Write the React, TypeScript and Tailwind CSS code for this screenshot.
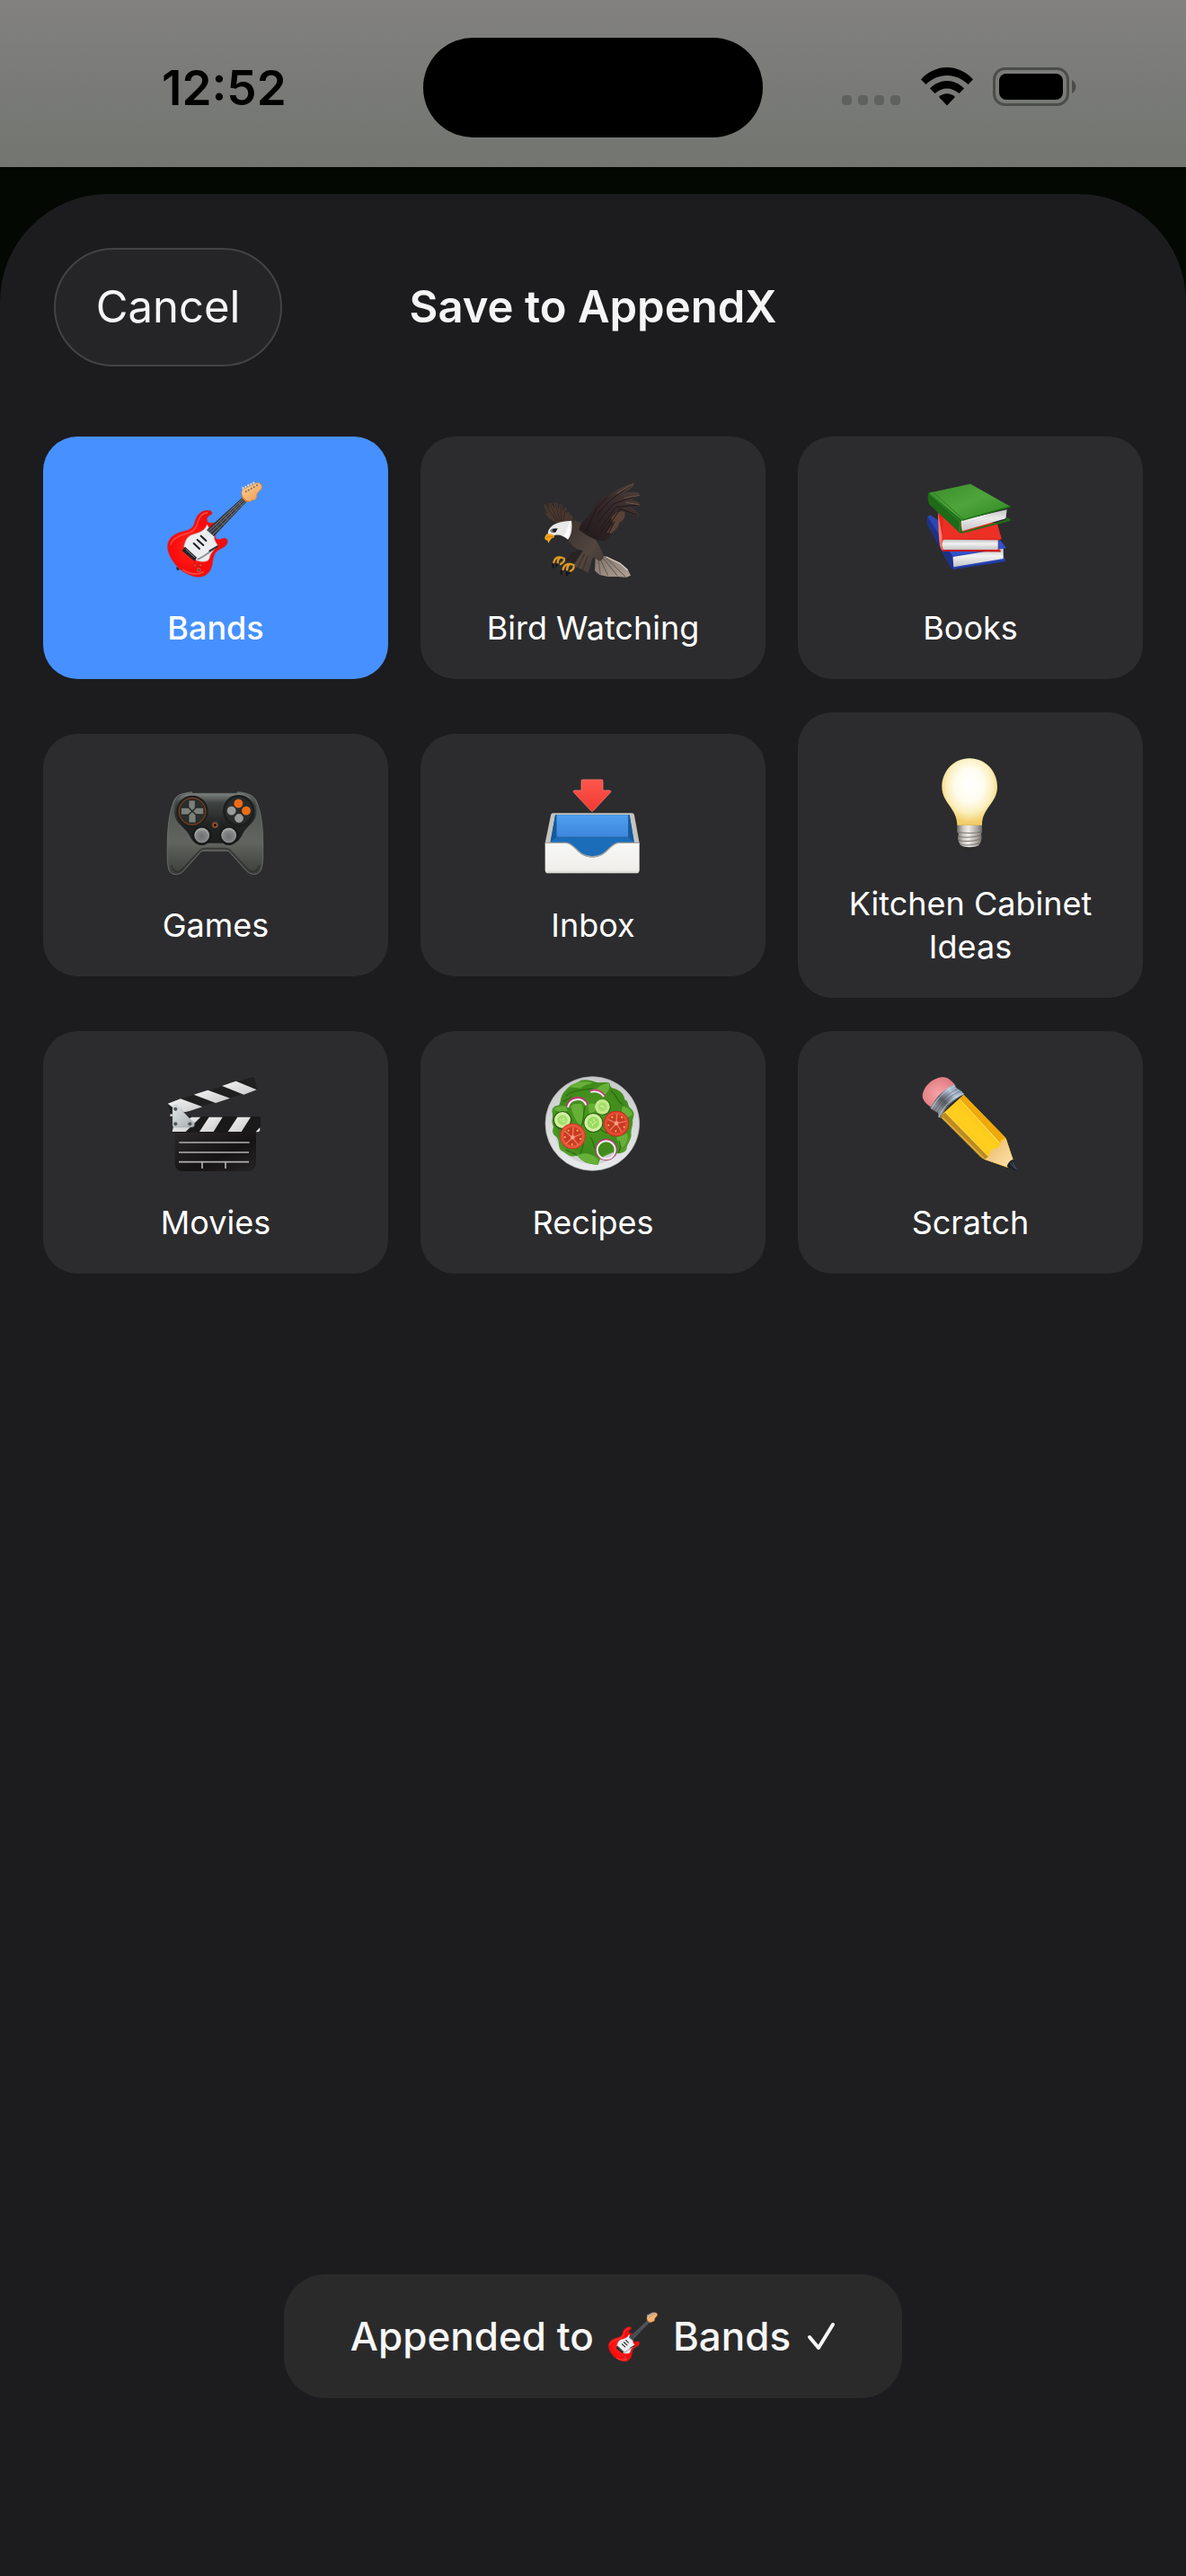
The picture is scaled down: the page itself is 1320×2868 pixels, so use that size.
import type { ReactNode } from 'react'

const Guitar = ({ className }: { className: string }) => {
  return (
    <svg viewBox="78 72 324 324" className={className} aria-hidden="true">
      <defs>
        <radialGradient id="guitarBody" cx="0.42" cy="0.55" r="0.6">
          <stop offset="0" stopColor="#ff2a20" />
          <stop offset="0.6" stopColor="#fb0a0a" />
          <stop offset="1" stopColor="#e41212" />
        </radialGradient>
        <linearGradient id="guitarHead" x1="0" y1="0" x2="1" y2="1">
          <stop offset="0" stopColor="#ffd29a" />
          <stop offset="1" stopColor="#ee9a4c" />
        </linearGradient>
      </defs>
      <path d="M108 364l12 2-2 9-8-1z" fill="#30343c" />
      <path d="M80 300C78 270 100 252 132 245C157 240 166 232 171 213C177 188 194 175 214 175C228 175 233 186 222 190C212 194 207 206 214 214C220 220 230 216 238 216L246 240C238 256 236 264 243 270C252 277 262 266 272 268C283 272 281 285 273 293C262 302 246 305 238 318C228 335 232 350 224 370C214 392 195 400 172 396C140 388 118 372 102 350C90 335 82 318 80 300Z" fill="url(#guitarBody)" stroke="#c9252f" strokeWidth="2" />
      <path d="M90 290C95 268 120 258 145 252C170 246 178 228 181 212C186 194 198 184 214 182" fill="none" stroke="#ff6a5c" strokeWidth="5" opacity="0.6" />
      <path d="M130 372C150 388 180 392 200 380" fill="none" stroke="#ff7a66" strokeWidth="6" opacity="0.5" />
      <path d="M211 222C206 240 190 248 162 256C142 263 138 280 134 296L176 342C198 349 216 346 219 335C222 315 240 303 247 291C238 280 233 268 236 256L222 240Z" fill="#eceef0" stroke="#b8a5a5" strokeWidth="2" />
      <path d="M333 128L347 142L234 262L210 240Z" fill="#33373d" />
      <path d="M334 133L214 246M338 137L220 252M343 141L228 258" stroke="#a9adb2" strokeWidth="2" />
      <path d="M214 246L172 290M220 252L178 296" stroke="#c3c6c9" strokeWidth="1" />
      <path d="M316 148l13 14M300 164l13 14M285 180l14 14M270 196l14 14M255 211l16 15M241 226l16 15" stroke="#7c8087" strokeWidth="2" />
      <path d="M191 260l17 16M179 273l20 18M167 285l19 18" stroke="#1d1f24" strokeWidth="6" strokeLinecap="round" />
      <path d="M138 296L177 332L170 345L128 310Z" fill="#24262a" />
      <path d="M140 304L170 332" stroke="#8c8f94" strokeWidth="3" />
      <path d="M178 338C192 336 210 322 234 303" fill="none" stroke="#8b9096" strokeWidth="5" />
      <path d="M220 310L246 295" stroke="#2f3338" strokeWidth="6" strokeLinecap="round" />
      <circle cx="171" cy="359" r="6" fill="#f23a30" stroke="#a80d0d" strokeWidth="2" />
      <circle cx="190" cy="358" r="6" fill="#f23a30" stroke="#a80d0d" strokeWidth="2" />
      <circle cx="184" cy="374" r="5" fill="#5b3030" stroke="#c9a3a0" strokeWidth="2" />
      <path d="M330 104C324 118 328 132 336 137C344 147 359 147 363 139C371 145 379 132 377 123C378 112 394 109 394 97C393 84 384 80 373 84Z" fill="url(#guitarHead)" stroke="#d9883f" strokeWidth="2" />
      <path d="M328 125C330 138 342 146 352 145" fill="none" stroke="#e7832c" strokeWidth="4" />
      <g fill="#e8eef5" stroke="#54657c" strokeWidth="1">
        <circle cx="331" cy="100" r="4" />
        <circle cx="340" cy="96" r="4" />
        <circle cx="349" cy="91" r="4" />
        <circle cx="358" cy="87" r="4" />
        <circle cx="367" cy="83" r="4" />
      </g>
      <g fill="#6c6a66">
        <circle cx="341" cy="112" r="3" />
        <circle cx="350" cy="107" r="3" />
        <circle cx="359" cy="102" r="3" />
        <circle cx="368" cy="97" r="3" />
        <circle cx="378" cy="91" r="3" />
      </g>
    </svg>
  )
}

const Eagle = () => {
  return (
    <svg viewBox="78 72 324 324" className="size-[108px] overflow-visible" aria-hidden="true">
      <defs>
        <linearGradient id="eagleWing" x1="1" y1="0" x2="0" y2="1">
          <stop offset="0" stopColor="#54423a" />
          <stop offset="0.45" stopColor="#35282a" />
          <stop offset="1" stopColor="#211919" />
        </linearGradient>
        <linearGradient id="eagleBody" x1="0" y1="0" x2="1" y2="1">
          <stop offset="0" stopColor="#39302d" />
          <stop offset="0.6" stopColor="#52463f" />
          <stop offset="1" stopColor="#3f3531" />
        </linearGradient>
        <linearGradient id="eagleTail" x1="0" y1="0" x2="1" y2="1">
          <stop offset="0" stopColor="#7d7067" />
          <stop offset="1" stopColor="#b0a295" />
        </linearGradient>
      </defs>
      <path d="M118 216L92 200L78 182L88 184L76 162L78 152L96 168L90 152L100 150L113 172L108 150L120 148L126 174L128 152L138 156L138 176L148 164L152 170L150 182L160 180L162 188L172 192L172 206L140 214Z" fill="#48372f" />
      <path d="M120 212L84 160M124 210L96 154M130 210L115 152M134 210L132 158M140 210L148 172" stroke="#2a211f" strokeWidth="2" />
      <path d="M248 326L282 328L330 350L356 372L366 392L352 398L322 396L290 396L262 390L246 376Z" fill="url(#eagleTail)" />
      <path d="M262 334L290 392M274 334L322 394M284 334L348 396M258 340L264 388" stroke="#5f544c" strokeWidth="3" />
      <path d="M284 330L330 352L356 374" fill="none" stroke="#d8cdc2" strokeWidth="4" />
      <path d="M166 208C185 206 205 215 214 232C240 262 258 280 276 326C272 345 262 350 246 332C242 328 238 334 236 342L224 384L204 372L180 362L178 345L148 342L168 314L192 306C175 300 160 282 152 264Z" fill="url(#eagleBody)" />
      <path d="M180 350L206 310L192 306L168 314L148 342Z" fill="#292423" />
      <path d="M190 365L212 320M205 374L222 326" stroke="#3b3230" strokeWidth="4" />
      <path d="M194 240C192 222 218 205 236 178C250 150 266 128 280 124L288 130C310 108 345 92 376 84C382 92 364 104 344 116C366 112 388 112 398 120C398 130 374 132 352 134C376 138 396 148 398 158C380 160 362 154 348 154C368 162 390 176 394 194C382 196 362 184 346 178C352 190 346 206 330 216C326 232 308 244 298 254C292 268 282 278 266 276C250 276 234 266 216 256Z" fill="url(#eagleWing)" />
      <path d="M345 178C350 194 344 208 328 216C326 232 312 242 300 252L286 248L308 218L300 200L320 180Z" fill="#5b4236" />
      <path d="M370 88L296 142L252 190M394 122L310 152L256 214M392 156L316 164L264 236M388 190L330 170L280 248M288 130L252 168L222 230M302 200L262 252M236 200L216 246M312 212L290 256" fill="none" stroke="#1f1818" strokeWidth="3" />
      <path d="M374 86L320 118M394 124L344 134M394 156L350 148" stroke="#6b5850" strokeWidth="3" />
      <path d="M168 209C145 210 118 214 104 226C92 236 88 246 90 256L106 260C122 252 140 258 156 272C168 260 172 232 168 209Z" fill="#e9e9e8" />
      <path d="M166 212C160 230 166 248 156 270L142 260C156 248 152 226 166 212Z" fill="#ffffff" />
      <path d="M96 242C104 234 112 234 120 236L114 248L102 250Z" fill="#77797c" />
      <path d="M104 238L122 235L116 247L108 248Z" fill="#1c1d20" />
      <path d="M89 252C80 256 76 268 82 274C88 272 90 278 90 284C98 276 98 268 108 266C114 262 110 256 102 254Z" fill="#f2a51c" />
      <path d="M84 266C92 260 100 264 108 264" fill="none" stroke="#b56c0b" strokeWidth="2" />
      <g fill="none" stroke="#dc9822" strokeWidth="7" strokeLinecap="round" strokeLinejoin="round">
        <path d="M144 336C132 328 114 328 109 348M132 332C124 336 122 342 122 350M144 340C144 348 138 350 132 354" />
        <path d="M176 358C164 350 144 352 140 372M162 354C154 360 153 366 153 374M176 362C176 372 170 374 164 378" />
      </g>
      <g fill="none" stroke="#111318" strokeWidth="5" strokeLinecap="round">
        <path d="M106 354L107 366M121 354L116 362M134 376L134 388M152 378L153 392M163 382L157 386" />
      </g>
    </svg>
  )
}

const Books = () => {
  return (
    <svg viewBox="78 72 324 324" className="size-[108px]" aria-hidden="true">
      <defs>
        <linearGradient id="bookGreen" x1="0" y1="0" x2="1" y2="1">
          <stop offset="0" stopColor="#3a8c2c" />
          <stop offset="0.5" stopColor="#4fa53c" />
          <stop offset="1" stopColor="#2b8420" />
        </linearGradient>
        <linearGradient id="bookPages" x1="0" y1="0" x2="0" y2="1">
          <stop offset="0" stopColor="#bfc0c0" />
          <stop offset="0.4" stopColor="#f2f2f2" />
          <stop offset="1" stopColor="#c4c4c6" />
        </linearGradient>
      </defs>
      <path d="M97 196L106 190L180 240L340 274L359 300L350 304L350 332L357 338L356 344L184 371L176 368L97 222Z" fill="#2b47b4" />
      <path d="M97 196L178 320L184 371L176 368L97 222Z" fill="#1d3187" />
      <path d="M182 330L350 302L350 336L184 364Z" fill="url(#bookPages)" />
      <path d="M182 326L359 300L340 276L230 280L160 300Z" fill="#3451cb" />
      <path d="M184 369L356 343" stroke="#203a9e" strokeWidth="5" />
      <path d="M132 180L150 170L330 220L344 270L332 275L332 298L341 312L152 312C140 308 138 296 138 280Z" fill="#e3261d" />
      <path d="M132 180L146 262L144 300L150 310C138 306 136 280 134 250Z" fill="#ff7d6c" />
      <path d="M150 272L332 274L332 306L150 306C144 298 144 282 150 272Z" fill="url(#bookPages)" />
      <path d="M146 268L344 270L330 222L150 182Z" fill="#ec3026" />
      <path d="M148 309L341 311" stroke="#c41710" strokeWidth="5" />
      <path d="M208 208L362 172L358 202L212 244Z" fill="url(#bookPages)" />
      <path d="M214 226L360 188M213 234L359 196M214 218L360 180" stroke="#cfcfd1" strokeWidth="2" />
      <path d="M98 122C100 114 110 112 116 114L212 204C206 214 208 232 214 250L204 250L102 154C98 144 98 134 98 122Z" fill="#1e6a17" />
      <path d="M104 120L206 212L204 246" fill="none" stroke="#2f8e25" strokeWidth="3" />
      <path d="M102 116L240 86L374 162L212 208Z" fill="url(#bookGreen)" />
      <path d="M116 114L218 206" stroke="#2b7a20" strokeWidth="3" />
      <path d="M212 208L374 162" stroke="#1b6d12" strokeWidth="4" />
      <path d="M206 248L360 206L358 198L375 204L372 210L214 251Z" fill="#20701a" />
    </svg>
  )
}

const Gamepad = () => {
  return (
    <svg viewBox="78 45 324 324" className="size-[108px] overflow-visible" aria-hidden="true">
      <defs>
        <linearGradient id="padShell" x1="0" y1="0" x2="0" y2="1">
          <stop offset="0" stopColor="#4c504d" />
          <stop offset="0.6" stopColor="#62645f" />
          <stop offset="1" stopColor="#3c3e3b" />
        </linearGradient>
        <linearGradient id="padFace" x1="0" y1="0" x2="0" y2="1">
          <stop offset="0" stopColor="#7b817e" />
          <stop offset="0.18" stopColor="#3f4442" />
          <stop offset="0.6" stopColor="#202322" />
          <stop offset="1" stopColor="#1c1d1d" />
        </linearGradient>
        <radialGradient id="padStick" cx="0.5" cy="0.6" r="0.6">
          <stop offset="0" stopColor="#6c6f70" />
          <stop offset="0.7" stopColor="#85898a" />
          <stop offset="1" stopColor="#b9bdbd" />
        </radialGradient>
      </defs>
      <path d="M96 140C98 112 118 98 160 94L166 102H310L312 94C356 96 378 114 382 142Z" fill="#626763" />
      <path d="M118 106C136 98 146 100 170 100H306C330 100 346 100 360 108C388 126 398 200 398 262C398 300 400 340 390 358C380 374 358 374 344 360L288 298C284 293 280 292 274 292H202C196 292 192 293 188 298L132 360C116 376 92 374 84 356C76 330 79 290 79 250C82 190 90 124 118 106Z" fill="url(#padShell)" stroke="#7b7e7a" strokeWidth="2" />
      <path d="M92 340C98 368 118 366 130 352L186 292C192 286 196 284 204 284H272C280 284 284 286 290 292L346 352C360 366 380 366 386 340" fill="none" stroke="#2c2e2c" strokeWidth="6" opacity="0.7" />
      <path d="M124 108C136 101 150 101 166 101H310C328 101 340 102 354 110C372 124 380 150 374 176C366 202 340 212 330 236C318 262 300 272 276 266H202C180 280 164 262 152 240C140 216 112 204 104 178C98 150 106 120 124 108Z" fill="url(#padFace)" />
      <circle cx="162" cy="160" r="53" fill="#1d1f1f" />
      <circle cx="162" cy="160" r="45" fill="#2b2e2d" stroke="#9c4316" strokeWidth="3" />
      <path d="M150 123H172V148H200V170H174V198H150V171H124V148H150Z" fill="#7b807b" stroke="#161817" strokeWidth="2" />
      <path d="M150 148L174 171M174 148L150 171" stroke="#222524" strokeWidth="4" />
      <circle cx="317" cy="158" r="53" fill="#1c1e1e" />
      <circle cx="317" cy="158" r="45" fill="#282b2a" />
      <circle cx="316" cy="134" r="14" fill="#f26a10" stroke="#ff9a45" strokeWidth="1" />
      <circle cx="342" cy="158" r="14" fill="#f26a10" stroke="#ff9a45" strokeWidth="1" />
      <circle cx="293" cy="158" r="14" fill="#9a9b9b" stroke="#bfbfbf" strokeWidth="1" />
      <circle cx="318" cy="183" r="14" fill="#9a9b9b" stroke="#bfbfbf" strokeWidth="1" />
      <circle cx="238" cy="205" r="12" fill="#3a3d3c" />
      <circle cx="238" cy="206" r="7" fill="#25170f" stroke="#e0631a" strokeWidth="3" />
      <circle cx="194" cy="241" r="32" fill="#181a1a" />
      <circle cx="284" cy="241" r="32" fill="#181a1a" />
      <circle cx="194" cy="240" r="24" fill="url(#padStick)" stroke="#a6aaaa" strokeWidth="2" />
      <circle cx="284" cy="240" r="24" fill="url(#padStick)" stroke="#a6aaaa" strokeWidth="2" />
    </svg>
  )
}

const InboxTray = () => {
  return (
    <svg viewBox="78 45 324 324" className="size-[108px]" aria-hidden="true">
      <defs>
        <linearGradient id="trayBack" x1="0" y1="0" x2="0" y2="1">
          <stop offset="0" stopColor="#4f9ff0" />
          <stop offset="1" stopColor="#3d87dc" />
        </linearGradient>
        <linearGradient id="trayFront" x1="0" y1="0" x2="0" y2="1">
          <stop offset="0" stopColor="#f8f8f6" />
          <stop offset="0.9" stopColor="#efeeea" />
          <stop offset="1" stopColor="#cfcdc8" />
        </linearGradient>
        <linearGradient id="trayArrow" x1="0" y1="0" x2="0" y2="1">
          <stop offset="0" stopColor="#ff564c" />
          <stop offset="1" stopColor="#f03a34" />
        </linearGradient>
      </defs>
      <path d="M106 166H370C375 166 377 169 378 173L395 266L380 300H96L80 266L99 173C100 169 102 166 106 166Z" fill="#c6c4bf" />
      <path d="M114 172H362L377 262L340 320H130L98 262Z" fill="#1a66ae" />
      <path d="M118 172H358V246H118Z" fill="url(#trayBack)" />
      <path d="M118 172V246L98 262L114 172Z" fill="#15599b" />
      <path d="M358 172V246L377 262L362 172Z" fill="#15599b" />
      <path d="M118 246H358L377 264V320H98V264Z" fill="#1c6db9" />
      <path d="M118 246H358" stroke="#2a5f93" strokeWidth="2" />
      <path d="M80 266H150C182 268 186 312 238 313C290 312 294 268 326 266H395V356C395 363 391 367 384 367H91C84 367 80 363 80 356Z" fill="url(#trayFront)" />
      <path d="M82 265H150C182 267 186 311 238 312C290 311 294 267 326 265H393" fill="none" stroke="#a7a49f" strokeWidth="4" />
      <path d="M206 54H269C272 54 273 56 273 58V90H295C300 90 301 94 298 97L242 157C239 161 235 161 232 157L176 97C173 94 174 90 179 90H201V58C201 56 203 54 206 54Z" fill="url(#trayArrow)" stroke="#ff8078" strokeWidth="2" />
    </svg>
  )
}

const Bulb = () => {
  return (
    <svg viewBox="288 183 324 324" className="size-[108px]" aria-hidden="true">
      <defs>
        <radialGradient id="bulbGlass" cx="0.5" cy="0.4" r="0.62">
          <stop offset="0" stopColor="#ffffff" />
          <stop offset="0.4" stopColor="#fffdf0" />
          <stop offset="0.68" stopColor="#fbeebb" />
          <stop offset="0.9" stopColor="#f3cf6c" />
        </radialGradient>
        <linearGradient id="bulbBase" x1="0" y1="0" x2="1" y2="0">
          <stop offset="0" stopColor="#75716d" />
          <stop offset="0.25" stopColor="#cfcac5" />
          <stop offset="0.45" stopColor="#eeebe8" />
          <stop offset="0.8" stopColor="#aaa5a0" />
          <stop offset="1" stopColor="#6e6a66" />
        </linearGradient>
      </defs>
      <path d="M426 486H470C466 498 460 504 448 504C436 504 430 498 426 486Z" fill="#2a2a28" />
      <path d="M406 416H489V438L486 446L488 458L485 472L478 484C468 492 428 492 418 484L411 472L408 458L411 446L406 438Z" fill="url(#bulbBase)" />
      <path d="M407 439C430 444 466 444 488 438M409 453C430 460 466 456 487 449M410 466C430 473 466 469 486 462M414 480C430 486 466 482 482 475" fill="none" stroke="#77726d" strokeWidth="3" />
      <path d="M447 193C500 193 540 236 540 288C540 342 488 360 489 416H406C406 360 355 342 355 288C355 236 395 193 447 193Z" fill="url(#bulbGlass)" />
      <path d="M407 415H488" stroke="#e7bd62" strokeWidth="3" />
    </svg>
  )
}

const Clapper = () => {
  return (
    <svg viewBox="78 78 324 324" className="size-[108px]" aria-hidden="true">
      <defs>
        <linearGradient id="clapStripe" x1="0" y1="0" x2="1" y2="1">
          <stop offset="0" stopColor="#f4f4f4" />
          <stop offset="1" stopColor="#c9c9c9" />
        </linearGradient>
        <linearGradient id="clapPlate" x1="0" y1="0" x2="1" y2="1">
          <stop offset="0" stopColor="#e3e7e9" />
          <stop offset="1" stopColor="#a6acb0" />
        </linearGradient>
        <linearGradient id="clapBoard" x1="0" y1="0" x2="1" y2="1">
          <stop offset="0" stopColor="#2a2829" />
          <stop offset="0.6" stopColor="#151314" />
          <stop offset="1" stopColor="#262425" />
        </linearGradient>
      </defs>
      <path d="M104 268H375V374C375 392 365 402 348 402H132C114 402 104 392 104 374Z" fill="url(#clapBoard)" />
      <path d="M80 174L360 88C366 86 369 90 371 96L378 130L92 216Z" fill="#201f20" />
      <path d="M80 176L123 160L196 187L150 202L120 208L88 182Z" fill="url(#clapStripe)" />
      <path d="M167 146L214 131L288 158L240 174Z" fill="url(#clapStripe)" />
      <path d="M261 117L308 101L377 130L334 146Z" fill="url(#clapStripe)" />
      <path d="M95 219H383C388 219 390 222 390 226V262C390 269 386 272 381 272H95Z" fill="#1a191a" />
      <path d="M218 221H263L233 270H186Z" fill="url(#clapStripe)" />
      <path d="M313 221H357L326 270H281Z" fill="url(#clapStripe)" />
      <path d="M160 221H190L140 270H95L98 256Z" fill="url(#clapStripe)" />
      <path d="M388 256V264C388 268 385 270 381 271H374Z" fill="#f4f4f4" />
      <path d="M100 184C105 180 111 181 115 186L167 240C172 246 170 255 160 255H102C98 255 96 252 96 248V192Z" fill="url(#clapPlate)" stroke="#888d90" strokeWidth="1" />
      <g fill="#4d5154" stroke="#8d9295" strokeWidth="1">
        <circle cx="106" cy="194" r="6" />
        <circle cx="106" cy="244" r="6" />
        <circle cx="154" cy="244" r="6" />
      </g>
      <circle cx="92" cy="215" r="4" fill="#e4e4e4" />
      <path d="M118 306H353M117 339H351M117 371H351M195 371V393M273 371V393" stroke="#b1b1b3" strokeWidth="5" />
    </svg>
  )
}

const Salad = () => {
  return (
    <svg viewBox="78 78 324 324" className="size-[108px]" aria-hidden="true">
      <defs>
        <linearGradient id="plate" x1="0" y1="0" x2="0" y2="1">
          <stop offset="0" stopColor="#c8c9cb" />
          <stop offset="1" stopColor="#e9eaec" />
        </linearGradient>
        <radialGradient id="leaf" cx="0.5" cy="0.45" r="0.6">
          <stop offset="0" stopColor="#4f9a22" />
          <stop offset="0.7" stopColor="#3f8a1b" />
          <stop offset="1" stopColor="#62a936" />
        </radialGradient>
      </defs>
      <circle cx="238" cy="243" r="157" fill="url(#plate)" stroke="#aeb0b3" strokeWidth="2" />
      <circle cx="238" cy="246" r="132" fill="#c2c4c6" opacity="0.6" />
      <path d="M150 130C165 112 185 108 200 98C215 94 235 98 248 104C270 108 285 102 296 108C296 118 300 124 312 126C330 132 344 144 346 162C362 170 354 184 366 192C380 204 378 216 372 232C376 250 364 262 368 282C366 302 352 312 352 330C340 346 320 344 304 340C285 352 262 350 258 380C240 380 214 376 200 362C190 350 184 346 178 352C160 356 150 340 134 334C120 320 132 300 116 286C100 276 106 262 108 252C98 236 108 224 104 208C100 192 110 182 126 182C134 172 128 150 150 130Z" fill="url(#leaf)" />
      <g fill="#66b038">
        <path d="M160 118C178 106 208 98 240 106C226 112 206 116 198 126C184 122 172 126 160 118Z" />
        <path d="M248 132C262 116 276 108 294 108C298 126 290 140 276 148C266 138 258 134 248 132Z" />
        <path d="M166 186C176 172 190 180 202 176C208 196 210 224 200 248C184 240 172 214 166 186Z" />
        <path d="M224 180C240 170 250 180 262 190C250 198 240 208 228 214Z" />
        <path d="M188 350C210 336 240 344 256 362L256 380C230 378 204 372 188 350Z" />
        <path d="M318 290C330 276 344 286 352 274C362 290 350 312 340 322C330 318 322 306 318 290Z" />
        <path d="M338 186C356 186 368 198 372 214C360 220 350 224 346 236C334 220 334 204 338 186Z" />
        <path d="M108 196C120 182 134 186 148 184L156 200L132 206Z" />
      </g>
      <g fill="none" stroke="#27660f" strokeWidth="4" opacity="0.8">
        <path d="M150 150C176 128 210 132 240 126M300 132C320 150 322 170 340 180M214 186C204 210 214 230 200 250M264 262C280 276 302 280 330 276M212 280C200 300 216 320 196 344M230 290C246 300 238 318 250 330M150 330C160 340 176 336 186 350M326 300C336 320 330 330 324 340M140 170C150 160 160 164 170 152" />
      </g>
      <path d="M155 188C160 154 208 146 218 180" fill="none" stroke="#b63a70" strokeWidth="12" />
      <path d="M156 189C162 158 206 152 217 181" fill="none" stroke="#f3eaf0" strokeWidth="6" />
      <path d="M232 135C250 128 270 136 278 152" fill="none" stroke="#c2457a" strokeWidth="10" />
      <path d="M232 138C250 132 268 140 276 153" fill="none" stroke="#f6eef3" strokeWidth="5" />
      <circle cx="273" cy="188" r="27" fill="#2f6c18" />
      <circle cx="271" cy="187" r="25" fill="#c7e98d" />
      <circle cx="271" cy="187" r="15" fill="#a3de6d" />
      <circle cx="138" cy="232" r="31" fill="#27600f" />
      <circle cx="138" cy="231" r="27" fill="#d3efa0" />
      <circle cx="138" cy="231" r="17" fill="#a3de6d" />
      <circle cx="241" cy="240" r="33" fill="#27600f" />
      <circle cx="241" cy="240" r="30" fill="#d3efa0" />
      <circle cx="241" cy="240" r="20" fill="#9bdc63" />
      <path d="M230 236l6 4M242 228l2 6M250 238l-6 4M238 250l2-6M130 228l4 4M142 224l-2 6M146 236l-6 0M266 184l6 2M276 190l-4-6" stroke="#e0f7b6" strokeWidth="3" strokeLinecap="round" />
      <circle cx="172" cy="285" r="43" fill="#c93a26" />
      <circle cx="172" cy="285" r="40" fill="#e9563a" />
      <circle cx="172" cy="285" r="31" fill="#c93a24" />
      <circle cx="318" cy="243" r="43" fill="#b92f1f" />
      <circle cx="318" cy="243" r="40" fill="#e54a33" />
      <circle cx="318" cy="243" r="31" fill="#c93a24" />
      <g fill="none" stroke="#ee7c5a" strokeWidth="4" strokeLinecap="round">
        <path d="M172 290L146 268M172 290L174 256M172 290L200 278M172 290L190 314M172 290L150 310" />
        <path d="M318 242L292 230M318 242L320 212M318 242L348 236M318 242L334 268M318 242L298 264" />
      </g>
      <circle cx="172" cy="289" r="7" fill="#f7a184" />
      <circle cx="318" cy="242" r="7" fill="#f7a184" />
      <g fill="#f3c65c">
        <circle cx="158" cy="266" r="3" />
        <circle cx="188" cy="266" r="3" />
        <circle cx="146" cy="288" r="3" />
        <circle cx="198" cy="294" r="3" />
        <circle cx="170" cy="312" r="3" />
        <circle cx="304" cy="222" r="3" />
        <circle cx="336" cy="222" r="3" />
        <circle cx="292" cy="248" r="3" />
        <circle cx="344" cy="254" r="3" />
        <circle cx="316" cy="268" r="3" />
      </g>
      <circle cx="284" cy="330" r="33" fill="none" stroke="#b63a70" strokeWidth="7" />
      <circle cx="284" cy="331" r="30" fill="none" stroke="#f4eef2" strokeWidth="6" />
    </svg>
  )
}

const Pencil = () => {
  return (
    <svg viewBox="78 78 324 324" className="size-[108px]" aria-hidden="true">
      <defs>
        <radialGradient id="eraser" cx="0.5" cy="0.55" r="0.6">
          <stop offset="0" stopColor="#f7a3a6" />
          <stop offset="1" stopColor="#e07a82" />
        </radialGradient>
        <linearGradient id="ferrule" x1="0" y1="1" x2="1" y2="0">
          <stop offset="0" stopColor="#4f5359" />
          <stop offset="0.25" stopColor="#8d9299" />
          <stop offset="0.45" stopColor="#595d63" />
          <stop offset="0.7" stopColor="#b5c3d6" />
          <stop offset="1" stopColor="#74879f" />
        </linearGradient>
        <linearGradient id="shaft" x1="0" y1="1" x2="1" y2="0">
          <stop offset="0" stopColor="#fdb90c" />
          <stop offset="0.5" stopColor="#ffcf1f" />
          <stop offset="1" stopColor="#f0a804" />
        </linearGradient>
        <linearGradient id="pencilWood" x1="0" y1="0" x2="1" y2="1">
          <stop offset="0" stopColor="#e8b765" />
          <stop offset="1" stopColor="#ffe2ad" />
        </linearGradient>
      </defs>
      <path d="M138 218L218 146L344 276C352 284 360 290 362 300L384 366L364 390L286 362L274 354Z" fill="url(#shaft)" />
      <path d="M138 218L156 206L304 356L286 362L274 354Z" fill="#bd8b20" />
      <path d="M146 222L284 358" stroke="#dcae3f" strokeWidth="5" />
      <path d="M156 204L300 352" stroke="#ffe061" strokeWidth="3" />
      <path d="M204 160L336 306" stroke="#ffe36a" strokeWidth="4" />
      <path d="M218 148L346 278L358 296L346 294L338 306L204 160Z" fill="#f0a90a" />
      <path d="M286 362C300 356 306 350 308 332C318 324 326 330 334 322C342 314 340 298 358 292L382 364L364 388Z" fill="url(#pencilWood)" />
      <path d="M382 362L396 396C396 400 392 401 388 400L362 386C364 376 372 366 382 362Z" fill="#1c222c" />
      <path d="M374 374L388 392M380 370L394 396" stroke="#4d5b70" strokeWidth="3" />
      <path d="M108 188C92 176 80 166 80 148C86 112 120 88 150 88C166 88 176 100 188 112Z" fill="url(#eraser)" />
      <path d="M106 190C122 158 154 124 186 112L192 122L212 136L218 146C190 156 156 188 140 224L134 222L132 208L112 196Z" fill="url(#ferrule)" />
      <path d="M110 194C126 162 158 128 190 116M134 222C148 188 184 150 218 142" fill="none" stroke="#cfd8e4" strokeWidth="3" opacity="0.8" />
      <path d="M120 204C136 170 166 140 200 126M128 208C144 176 174 148 206 134" fill="none" stroke="#3f444b" strokeWidth="2" opacity="0.7" />
    </svg>
  )
}

const folders: { name: string; icon: ReactNode; selected?: boolean }[] = [
  { name: 'Bands', icon: <Guitar className="size-[108px] overflow-visible" />, selected: true },
  { name: 'Bird Watching', icon: <Eagle /> },
  { name: 'Books', icon: <Books /> },
  { name: 'Games', icon: <Gamepad /> },
  { name: 'Inbox', icon: <InboxTray /> },
  { name: 'Kitchen Cabinet Ideas', icon: <Bulb /> },
  { name: 'Movies', icon: <Clapper /> },
  { name: 'Recipes', icon: <Salad /> },
  { name: 'Scratch', icon: <Pencil /> },
]

const StatusBar = () => {
  return (
    <div className="grid grid-cols-[1fr_auto_1fr] items-start h-[186px] pt-[42px] bg-linear-to-b from-[#828180] to-[#727570] text-black">
      <p className="pt-[24px] pl-[180px] text-[53px] leading-[64px] font-semibold">12:52</p>
      <div className="w-[378px] h-[111px] rounded-full bg-black" />
      <div className="flex items-start justify-end pt-[33px] pr-[121px]">
        <svg viewBox="0 0 66 43" className="w-[66px] h-[43px] mr-[22px]" fill="#5f615f" aria-hidden="true">
          <rect x="0" y="31" width="11" height="11" rx="4" />
          <rect x="18" y="31" width="11" height="11" rx="4" />
          <rect x="36" y="31" width="11" height="11" rx="4" />
          <rect x="54" y="31" width="11" height="11" rx="4" />
        </svg>
        <svg viewBox="0 0 58 43" className="w-[58px] h-[43px] mr-[22px]" aria-hidden="true">
          <path d="M0 13.500C16 -4.500 42 -4.500 58 13.500L52.500 19C39 5.500 19 5.500 5.500 19Z" />
          <path d="M10 23.500C21 12 37 12 48 23.500L42.500 29C34 21.500 24 21.500 15.500 29Z" />
          <path d="M20 33C25 28 33 28 38 33L29 42.500Z" />
        </svg>
        <svg viewBox="0 0 94 43" className="w-[94px] h-[43px]" aria-hidden="true">
          <rect x="1.500" y="1.500" width="82" height="40" rx="12" fill="none" stroke="#4b4d4b" strokeWidth="3" />
          <rect x="7" y="7" width="71" height="29" rx="8" />
          <path d="M88 14C94 17 94 26 88 29Z" fill="#4b4d4b" />
        </svg>
      </div>
    </div>
  )
}

const App = () => {
  return (
    <div className="min-h-screen flex flex-col bg-[#030803] text-white font-['Inter','Liberation_Sans',sans-serif]">
      <StatusBar />
      <main className="flex-1 flex flex-col mt-[30px] rounded-t-[120px] bg-[#1c1c1e]">
        <header className="grid grid-cols-[1fr_auto_1fr] items-center px-[60px] pt-[60px]">
          <button
            type="button"
            className="justify-self-start w-[254px] h-[132px] rounded-full border-2 border-[#434345] bg-[#252527] text-[49px] text-[#f5f5f5]"
          >
            Cancel
          </button>
          <h1 className="text-[49px] font-semibold text-[#f5f5f5]">Save to AppendX</h1>
        </header>

        <div className="grid grid-cols-3 items-center gap-x-[36px] gap-y-[37px] px-[48px] mt-[78px]">
          {folders.map((folder) => (
            <button
              key={folder.name}
              type="button"
              aria-pressed={!!folder.selected}
              className={
                folder.selected
                  ? 'flex flex-col items-center pt-[48px] pb-[33px] px-[24px] rounded-[38px] bg-[#4691ff] font-medium'
                  : 'flex flex-col items-center pt-[48px] pb-[33px] px-[24px] rounded-[38px] bg-[#2c2c2e]'
              }
            >
              {folder.icon}
              <span className="mt-[33px] text-[36px] leading-[48px] text-center">{folder.name}</span>
            </button>
          ))}
        </div>

        <div
          role="status"
          className="flex items-center justify-center mx-auto mt-auto mb-[198px] h-[138px] px-[74px] rounded-[46px] bg-[#2a2a2a] text-[44px] font-medium text-[#f7f7f7]"
        >
          <span>Appended to</span>
          <Guitar className="size-[56px] mx-[16px] overflow-visible" />
          <span>Bands</span>
          <svg viewBox="0 0 32 32" className="size-[32px] ml-[18px]" aria-hidden="true">
            <path d="M3 17L13 29L29 3" fill="none" stroke="#f7f7f7" strokeWidth="4" strokeLinecap="round" strokeLinejoin="round" />
          </svg>
        </div>
      </main>
    </div>
  )
}

export default App
